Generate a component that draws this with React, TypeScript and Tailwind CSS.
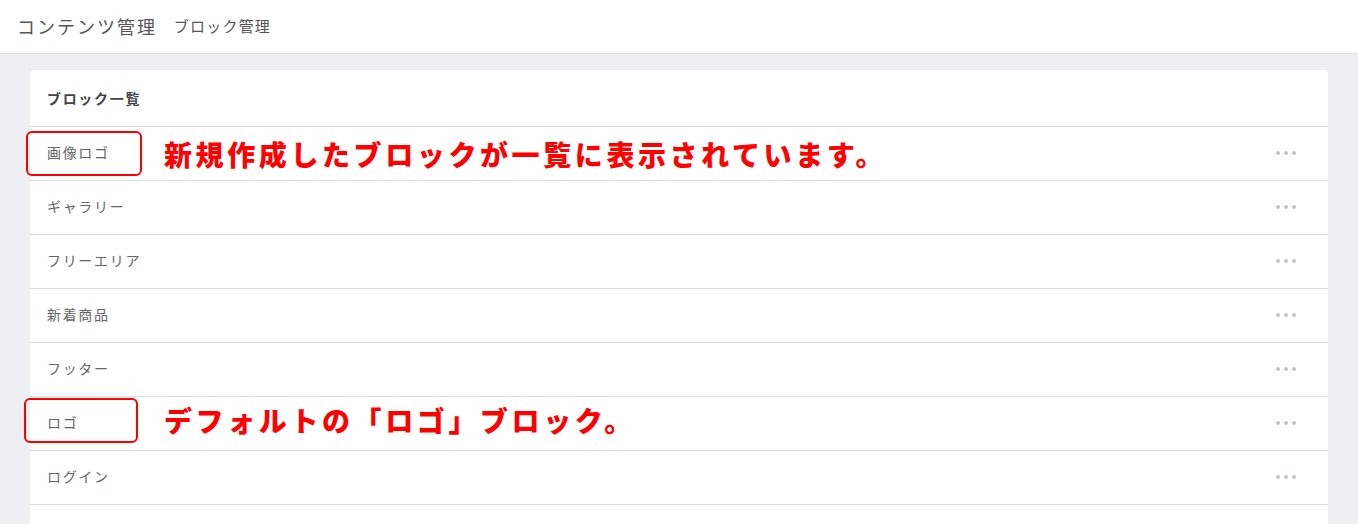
import React from "react";

const font = { fontFamily: '"Noto Sans CJK JP", "Noto Sans", sans-serif' };

function Dots() {
  return (
    <div className="flex items-center gap-[4px]">
      <span className="w-[4px] h-[4px] rounded-full bg-[#bfc3ca]" />
      <span className="w-[4px] h-[4px] rounded-full bg-[#bfc3ca]" />
      <span className="w-[4px] h-[4px] rounded-full bg-[#bfc3ca]" />
    </div>
  );
}

type Row = { name: string; note?: string; box?: "a" | "b" };

const rows: Row[] = [
  { name: "画像ロゴ", note: "新規作成したブロックが一覧に表示されています。", box: "a" },
  { name: "ギャラリー" },
  { name: "フリーエリア" },
  { name: "新着商品" },
  { name: "フッター" },
  { name: "ロゴ", note: "デフォルトの「ロゴ」ブロック。", box: "b" },
  { name: "ログイン" },
  { name: "新着情報" },
];

export default function App() {
  return (
    <div className="w-[1358px] h-[524px] overflow-hidden bg-[#eeeff3]" style={font}>
      <header className="h-[54px] bg-white border-b border-[#dfe2e6] flex items-center pl-[17px] pb-[2px] gap-[17px]">
        <span className="text-[18px] tracking-[0.11em] text-[#555] leading-none">コンテンツ管理</span>
        <span className="text-[15px] tracking-[0.08em] text-[#555] leading-none">ブロック管理</span>
      </header>
      <div className="px-[30px] pt-[16px]">
        <div className="bg-white rounded-[4px]">
          <div className="h-[56px] flex items-center pl-[17px]">
            <span className="text-[14px] font-bold tracking-[0.12em] text-[#444]">ブロック一覧</span>
          </div>
          {rows.map((r) => (
            <div
              key={r.name}
              className="relative h-[54px] border-t border-[#d8dcdc] flex items-center justify-between pl-[17px] pr-[32px] pb-[2px]"
            >
              <span className="text-[14px] tracking-[0.12em] text-[#666]">{r.name}</span>
              <Dots />
              {r.box === "a" && (
                <div className="absolute left-[-4px] top-[4px] w-[116px] h-[45px] border-[2px] border-[#ff0000] rounded-[6px]" />
              )}
              {r.box === "b" && (
                <div className="absolute left-[-6px] top-[1px] w-[114px] h-[45px] border-[2px] border-[#ff0000] rounded-[6px]" />
              )}
              {r.note && (
                <span
                  className={
                    "absolute left-[134px] text-[28px] font-black tracking-[3.6px] text-[#ff0000] leading-none " +
                    (r.box === "b" ? "top-[9px]" : "top-[13px]")
                  }
                >
                  {r.note}
                </span>
              )}
            </div>
          ))}
        </div>
      </div>
    </div>
  );
}
